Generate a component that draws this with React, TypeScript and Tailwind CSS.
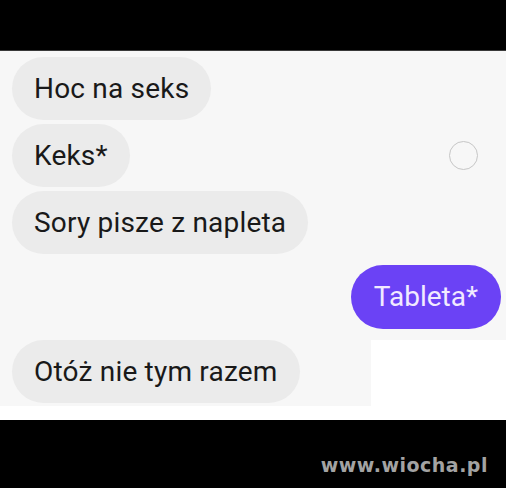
const Bubble = ({ text, mine = false }: { text: string; mine?: boolean }) => (
  <div
    className={
      mine
        ? "h-[64px] rounded-full bg-[#6b42f5] px-[23px] flex items-center text-[28px] text-[#f1eaff]"
        : "h-[63px] rounded-full bg-[#ebebeb] px-[22px] flex items-center text-[28px] tracking-[0.2px] text-[#191919]"
    }
  >
    {text}
  </div>
);

const App = () => {
  return (
    <div
      className="w-[506px] h-[488px] flex flex-col bg-black"
      style={{ fontFamily: "Roboto, 'Liberation Sans', sans-serif" }}
    >
      <div className="h-[51px] border-b border-[#3a3a3a]" />
      <div className="h-[369px] flex flex-col bg-white">
        <div className="bg-[#f7f7f7] flex flex-col pt-[6px] pl-[12px] gap-[4px]">
          <div className="flex">
            <Bubble text="Hoc na seks" />
          </div>
          <div className="flex items-center justify-between pr-[28px]">
            <Bubble text="Keks*" />
            <div className="w-[29px] h-[29px] rounded-full border-[1.5px] border-[#c6c6c6]" />
          </div>
          <div className="flex">
            <Bubble text="Sory pisze z napleta" />
          </div>
          <div className="flex justify-end pr-[5px] pt-[7px] pb-[11px]">
            <Bubble text="Tableta*" mine />
          </div>
        </div>
        <div className="flex">
          <div className="w-[371px] bg-[#f7f7f7] pl-[12px] pb-[3px]">
            <div className="flex">
              <Bubble text="Otóż nie tym razem" />
            </div>
          </div>
          <div className="flex-1 bg-white" />
        </div>
      </div>
      <div className="flex-1 flex items-center justify-end pr-[18px] pt-[22px]">
        <span
          className="text-[19px] font-bold text-[#a3a3a3] tracking-[0.5px]"
          style={{ fontFamily: "'DejaVu Sans', sans-serif" }}
        >
          www.wiocha.pl
        </span>
      </div>
    </div>
  );
};

export default App;
